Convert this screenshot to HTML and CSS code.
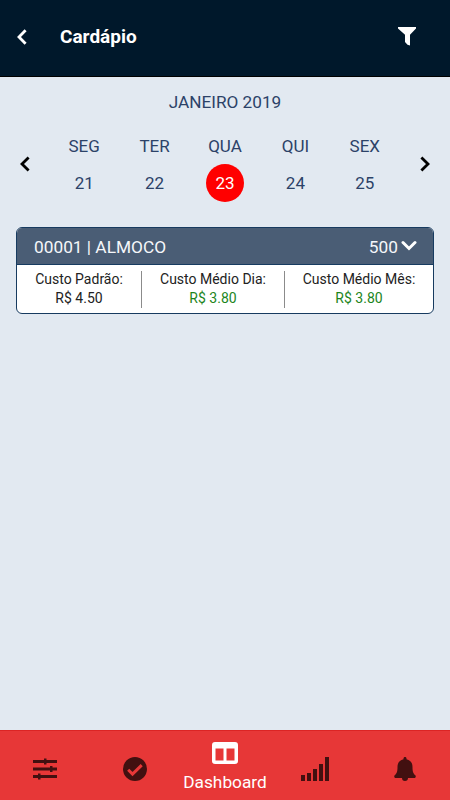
FILE: index.html
```html
<!DOCTYPE html>
<html lang="pt-BR">
<head>
<meta charset="utf-8">
<title>Cardápio</title>
<link rel="stylesheet" href="styles.css">
</head>
<body>
<header class="topbar">
  <svg class="back" width="10" height="16" viewBox="0 0 10 16"><path d="M8.600 1.200 2 8l6.600 6.800"/></svg>
  <h1>Cardápio</h1>
  <svg class="filter" width="20" height="20" viewBox="0 0 20 20"><path d="M1 1h18v1.600l-6 6.200V19.500l-2.500-.8L8 16V8.800L1 2.600z"/></svg>
</header>
<main>
  <div class="month">JANEIRO 2019</div>
  <div class="week">
    <svg class="arrow" width="10" height="16" viewBox="0 0 10 16"><path d="M8.600 1.500 2 8l6.600 6.500"/></svg>
    <div class="days">
      <div class="day"><span>SEG</span><b>21</b></div>
      <div class="day"><span>TER</span><b>22</b></div>
      <div class="day active"><span>QUA</span><b>23</b></div>
      <div class="day"><span>QUI</span><b>24</b></div>
      <div class="day"><span>SEX</span><b>25</b></div>
    </div>
    <svg class="arrow" width="10" height="16" viewBox="0 0 10 16"><path d="M1.400 1.500 8 8l-6.600 6.500"/></svg>
  </div>
  <section class="card">
    <div class="card-head">
      <span class="name">00001 | ALMOCO</span>
      <span class="count">500</span>
      <svg width="16" height="11" viewBox="0 0 16 11"><path d="m2 2.500 6 6 6-6"/></svg>
    </div>
    <div class="costs">
      <div class="cost"><span>Custo Padrão:</span><span>R$ 4.50</span></div>
      <div class="cost good"><span>Custo Médio Dia:</span><span>R$ 3.80</span></div>
      <div class="cost good"><span>Custo Médio Mês:</span><span>R$ 3.80</span></div>
    </div>
  </section>
</main>
<nav class="tabs">
  <div class="tab"><svg width="26" height="22" viewBox="0 0 26 22"><path d="M1 2h24v3H1zM1 9.500h24v3H1zM1 17h24v3H1zM12 .500h2.500v6H12zM18 8h2.500v6H18zM6 15.500h2.500v6H6z"/></svg></div>
  <div class="tab"><svg width="24" height="24" viewBox="0 0 24 24"><circle cx="12" cy="12" r="12"/><path class="check" d="m5.200 12.800 4.300 4.300 9.200-9"/></svg></div>
  <div class="tab current">
    <svg width="26" height="22" viewBox="0 0 26 22"><path fill-rule="evenodd" d="M3 0h20a3 3 0 0 1 3 3v16a3 3 0 0 1-3 3H3a3 3 0 0 1-3-3V3a3 3 0 0 1 3-3zM3.500 6.500v12h8v-12zM14.500 6.500v12h8v-12z"/></svg>
    <span>Dashboard</span>
  </div>
  <div class="tab"><svg width="28" height="24" viewBox="0 0 28 24"><path d="M0 18h4v6H0zM6 16h4v8H6zM12 12h4v12h-4zM18 7h4v17h-4zM24 0h4v24h-4z"/></svg></div>
  <div class="tab"><svg width="22" height="24" viewBox="0 0 22 24"><path d="M11 0c1 0 1.500.700 1.500 1.600v.700c4 .800 6 3.700 6 7.700 0 5 1 6.700 2.800 8.300.900.900.500 2.700-1 2.700H14a3 3 0 0 1-6 0H1.700c-1.500 0-1.900-1.800-1-2.700C2.500 16.700 3.500 15 3.500 10c0-4 2-6.900 6-7.700v-.700C9.500.700 10 0 11 0z"/></svg></div>
</nav>
</body>
</html>
```
FILE: styles.css
```css
* { box-sizing: border-box; }
body {
  margin: 0;
  height: 800px;
  display: flex;
  flex-direction: column;
  background: #e2e9f1;
  font-family: Roboto, sans-serif;
  color: #2c4268;
}
svg { display: block; flex: none; }
.topbar {
  height: 77px;
  display: flex;
  align-items: center;
  padding: 0 33px 3px 17px;
  background: #00182b;
  border-bottom: 1px solid #000;
}
.back, .arrow { fill: none; stroke: #fff; stroke-width: 2.8; }
.arrow { stroke: #000; margin-bottom: 11px; }
h1 {
  flex: 1;
  margin: 0 0 0 33px;
  font-size: 19px;
  line-height: 24px;
  font-weight: 700;
  color: #fff;
}
.filter { fill: #fff; margin-bottom: 2px; }
main { flex: 1; }
.month {
  padding-top: 15px;
  text-align: center;
  font-size: 17.2px;
  line-height: 20px;
}
.week {
  display: flex;
  align-items: center;
  justify-content: space-between;
  margin-top: 24px;
  padding: 0 20px;
  height: 66px;
}
.days {
  width: 352px;
  display: grid;
  grid-template-columns: repeat(5, 1fr);
}
.day {
  display: flex;
  flex-direction: column;
  align-items: center;
  font-size: 17px;
  line-height: 20px;
}
.day:last-child { padding-right: 2px; }
.day b {
  width: 38px;
  height: 38px;
  margin-top: 8px;
  border-radius: 50%;
  line-height: 38px;
  text-align: center;
  font-weight: 400;
}
.active b { background: #f00; color: #fff; }
.card {
  margin: 25px 16px 0;
  height: 87px;
  border: 1px solid #173b60;
  border-radius: 6px;
  background: #fff;
  overflow: hidden;
}
.card-head {
  height: 37px;
  display: flex;
  align-items: center;
  padding: 2px 16px 0 17px;
  background: #4a5d75;
  border-bottom: 1px solid #173b60;
  color: #f5f7fa;
  font-size: 17.3px;
}
.name { flex: 1; }
.count { margin-right: 3px; }
.card-head svg { fill: none; stroke: #fff; stroke-width: 3; stroke-linecap: round; margin-bottom: 3px; }
.costs {
  display: grid;
  grid-template-columns: 124px 143px 1fr;
  padding-top: 6px;
}
.cost {
  height: 37px;
  display: flex;
  flex-direction: column;
  align-items: center;
  font-size: 14px;
  line-height: 19px;
  color: #222;
  white-space: nowrap;
}
.cost span:first-child { margin-top: -1px; }
.cost + .cost { border-left: 1px solid #8b8b8b; }
.good span:last-child { color: #1c851c; }
.tabs {
  height: 70px;
  display: grid;
  grid-template-columns: repeat(5, 1fr);
  background: #e73737;
  border-top: 1px solid #dc2424;
}
.tab {
  display: flex;
  flex-direction: column;
  align-items: center;
  justify-content: center;
  padding-top: 7px;
  fill: #421010;
}
.check { fill: none; stroke: #e73737; stroke-width: 3; }
.current {
  justify-content: flex-start;
  padding-top: 11px;
  fill: #fff;
  color: #fff;
  font-size: 17.300px;
  line-height: 20px;
}
.current span { margin-top: 8px; }
```
